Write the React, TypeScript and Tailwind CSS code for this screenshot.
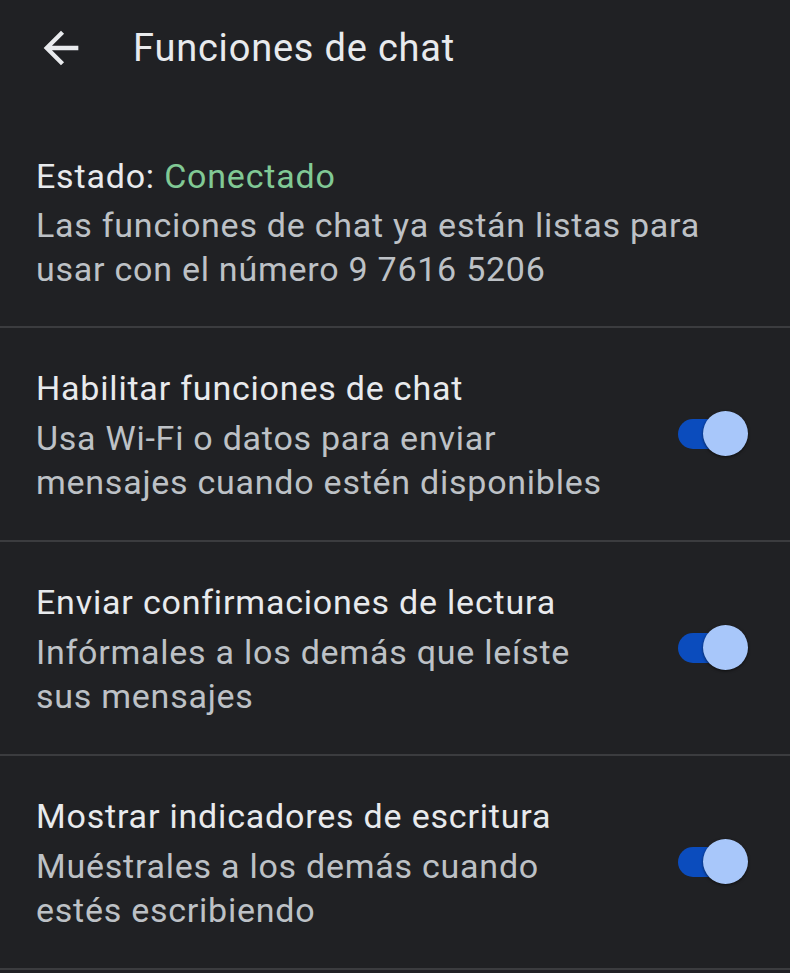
import React from "react";

function Toggle() {
  return (
    <div className="relative w-[70px] h-[46px] shrink-0">
      <div className="absolute left-0 top-[8px] w-[62px] h-[30px] rounded-full bg-[#0b4cbd]" />
      <div className="absolute right-0 top-0 w-[45px] h-[45px] rounded-full bg-[#a8c7fa] shadow-[0_1px_3px_rgba(0,0,0,0.6)]" />
    </div>
  );
}

function Row({ title, lines }: { title: string; lines: string[] }) {
  return (
    <div className="border-t-2 border-[#3b3c3f] pl-[36px] pr-[42px] pt-[35px] pb-[36px] flex items-center">
      <div className="flex-1">
        <div className="text-[34px] tracking-[0.8px] leading-[50px] text-[#e8eaed]">{title}</div>
        <div className="mt-[3px] text-[34px] tracking-[0.75px] leading-[44px] text-[#bdc1c6]">
          {lines.map((l) => (
            <div key={l}>{l}</div>
          ))}
        </div>
      </div>
      <Toggle />
    </div>
  );
}

export default function App() {
  return (
    <div
      className="w-[790px] h-[973px] overflow-hidden bg-[#202124]"
      style={{ fontFamily: "Roboto, 'Open Sans', sans-serif" }}
    >
      <div className="h-[96px] flex items-center">
        <svg
          viewBox="0 0 24 24"
          className="ml-[35px] w-[52px] h-[52px]"
          fill="#e8eaed"
        >
          <path d="M20 11H7.83l5.59-5.59L12 4l-8 8 8 8 1.41-1.41L7.83 13H20v-2z" />
        </svg>
        <div className="ml-[46px] text-[38px] tracking-[0.8px] text-[#e8eaed]">Funciones de chat</div>
      </div>
      <div className="pl-[36px] pr-[42px] pt-[55px] pb-[35px]">
        <div className="text-[34px] tracking-[0.8px] leading-[50px] text-[#e8eaed]">
          Estado: <span className="text-[#81c995]">Conectado</span>
        </div>
        <div className="mt-[2px] text-[34px] tracking-[0.75px] leading-[44px] text-[#bdc1c6] whitespace-nowrap">
          <div>Las funciones de chat ya están listas para</div>
          <div>usar con el número 9 7616 5206</div>
        </div>
      </div>
      <Row
        title="Habilitar funciones de chat"
        lines={["Usa Wi-Fi o datos para enviar", "mensajes cuando estén disponibles"]}
      />
      <Row
        title="Enviar confirmaciones de lectura"
        lines={["Infórmales a los demás que leíste", "sus mensajes"]}
      />
      <Row
        title="Mostrar indicadores de escritura"
        lines={["Muéstrales a los demás cuando", "estés escribiendo"]}
      />
      <div className="border-t-2 border-[#3b3c3f]" />
    </div>
  );
}
